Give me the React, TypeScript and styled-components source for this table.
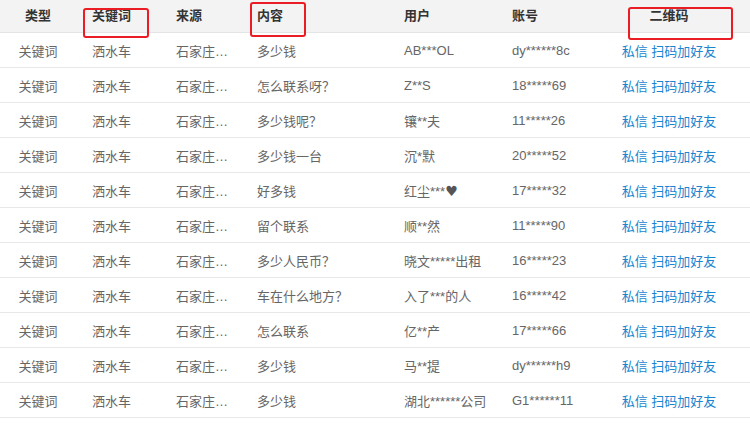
import * as React from 'react';
import styled, { createGlobalStyle } from 'styled-components';

const GlobalStyles = createGlobalStyle`
  html, body {
    margin: 0;
    padding: 0;
    background: #ffffff;
    font-family: "Liberation Sans", "Noto Sans CJK SC", sans-serif;
    font-size: 13px;
  }
`;

const columns = '76px 100px 81px 147px 108px 98px 118px 1fr';

const Table = styled.div`
  width: 750px;
  display: flex;
  flex-direction: column;
`;

const HeadRow = styled.div`
  position: relative;
  display: grid;
  grid-template-columns: ${columns};
  height: 33px;
  align-items: center;
  background: #f3f3f3;
  border-bottom: 1px solid #e4e4e4;
  box-sizing: border-box;
  padding-bottom: 3px;
`;

const Row = styled.div`
  display: grid;
  grid-template-columns: ${columns};
  height: 35px;
  align-items: center;
  border-bottom: 1px solid #e8e8e8;
  box-sizing: border-box;
`;

const HeadCell = styled.div<{ $center?: boolean; $pad?: boolean }>`
  color: #333333;
  font-weight: bold;
  text-align: ${({ $center }) => ($center ? 'center' : 'left')};
  padding-left: ${({ $pad }) => ($pad ? '16px' : '0')};
  white-space: nowrap;
`;

const Cell = styled.div<{ $center?: boolean; $pad?: boolean }>`
  color: #666666;
  text-align: ${({ $center }) => ($center ? 'center' : 'left')};
  padding-left: ${({ $pad }) => ($pad ? '16px' : '0')};
  white-space: nowrap;
`;

const Link = styled.a`
  color: #1a86d0;
  text-decoration: none;
  cursor: pointer;
`;

const Heart = styled.span`
  color: #555555;
  font-family: "DejaVu Sans", sans-serif;
  font-size: 14px;
`;

const Mark = styled.div<{ $left: number; $top: number; $w: number; $h: number }>`
  position: absolute;
  left: ${({ $left }) => $left}px;
  top: ${({ $top }) => $top}px;
  width: ${({ $w }) => $w}px;
  height: ${({ $h }) => $h}px;
  border: 2px solid #ea1c24;
  border-radius: 3px;
  box-sizing: border-box;
`;

const rows: { content: string; user: React.ReactNode; account: string }[] = [
  { content: '多少钱', user: 'AB***OL', account: 'dy******8c' },
  { content: '怎么联系呀？', user: 'Z**S', account: '18*****69' },
  { content: '多少钱呢？', user: '镶**夫', account: '11*****26' },
  { content: '多少钱一台', user: '沉*默', account: '20*****52' },
  {
    content: '好多钱',
    user: (
      <>
        红尘***<Heart>♥</Heart>
      </>
    ),
    account: '17*****32',
  },
  { content: '留个联系', user: '顺**然', account: '11*****90' },
  { content: '多少人民币？', user: '晓文*****出租', account: '16*****23' },
  { content: '车在什么地方？', user: '入了***的人', account: '16*****42' },
  { content: '怎么联系', user: '亿**产', account: '17*****66' },
  { content: '多少钱', user: '马**提', account: 'dy******h9' },
  { content: '多少钱', user: '湖北******公司', account: 'G1******11' },
];

const App = () => (
  <>
    <GlobalStyles />
    <Table>
      <HeadRow>
        <HeadCell $center>类型</HeadCell>
        <HeadCell $pad>关键词</HeadCell>
        <HeadCell>来源</HeadCell>
        <HeadCell>内容</HeadCell>
        <HeadCell>用户</HeadCell>
        <HeadCell>账号</HeadCell>
        <HeadCell $center>二维码</HeadCell>
        <div />
        <Mark $left={83} $top={8} $w={66} $h={30} />
        <Mark $left={250} $top={2} $w={56} $h={35} />
        <Mark $left={628} $top={7} $w={105} $h={33} />
      </HeadRow>
      {rows.map((r, i) => (
        <Row key={i}>
          <Cell $center>关键词</Cell>
          <Cell $pad>洒水车</Cell>
          <Cell>石家庄…</Cell>
          <Cell>{r.content}</Cell>
          <Cell>{r.user}</Cell>
          <Cell>{r.account}</Cell>
          <Cell $center>
            <Link>私信</Link> <Link>扫码加好友</Link>
          </Cell>
          <div />
        </Row>
      ))}
    </Table>
  </>
);

export default App;
